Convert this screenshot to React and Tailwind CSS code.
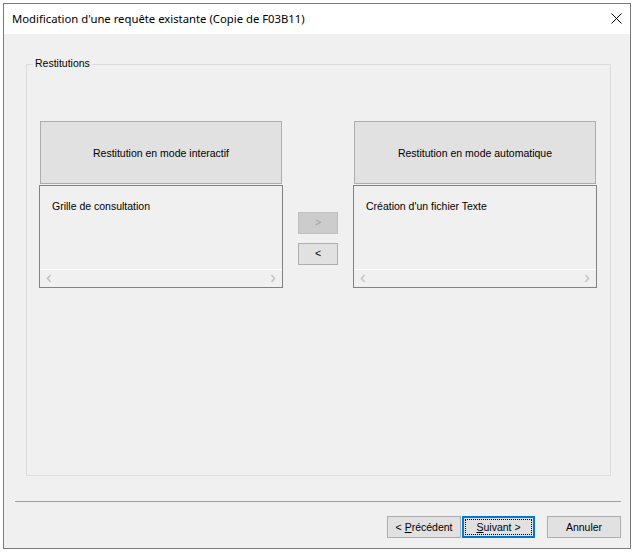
import React from 'react';

function Chevron({ dir }) {
    return (
        <svg width="6" height="9" viewBox="0 0 6 9" className="block">
            {dir === 'left' ? (
                <polyline points="4.5,1 1.5,4.5 4.5,8" fill="none" stroke="#c4c4c4" strokeWidth="1.6" />
            ) : (
                <polyline points="1.5,1 4.5,4.5 1.5,8" fill="none" stroke="#c4c4c4" strokeWidth="1.6" />
            )}
        </svg>
    );
}

function ListPanel({ header, item }) {
    return (
        <div className="flex w-[244px] flex-col">
            <div className="mx-[1px] flex h-[63px] items-center justify-center border border-[#adadad] bg-[#e1e1e1] pt-[2px]">
                {header}
            </div>
            <div className="mt-[1px] flex h-[103px] flex-col border border-[#828282] bg-[#f0f0f0]">
                <div className="flex-1 pl-[12px] pt-[14px] leading-[13px]">{item}</div>
                <div className="flex h-[18px] items-center justify-between border-t border-white pl-[6px] pr-[6px]">
                    <Chevron dir="left" />
                    <Chevron dir="right" />
                </div>
            </div>
        </div>
    );
}

export default function App() {
    return (
        <div className="min-h-[552px] bg-white pl-[3px] pt-[3px] font-['Liberation_Sans',Arial,sans-serif] text-[10.5px] text-black">
            <div className="flex h-[546px] w-[628px] flex-col border border-[#7a7a7a]">
                {/* Title bar */}
                <div className="flex h-[30px] items-center justify-between bg-white pl-[8px] pr-[7px]">
                    <span className="font-['Noto_Sans',sans-serif] text-[11.3px] leading-none text-black">
                        Modification d'une requête existante (Copie de F03B11)
                    </span>
                    <svg width="11" height="11" viewBox="0 0 11 11" className="mr-[1px] mt-[-2px]">
                        <path d="M0.5 0.5 L10.5 10.5 M10.5 0.5 L0.5 10.5" stroke="#000" strokeWidth="1" />
                    </svg>
                </div>

                {/* Content */}
                <div className="flex flex-1 flex-col bg-[#f0f0f0]">
                    <div className="relative ml-[22px] mt-[30px] h-[412px] w-[585px] border border-[#dcdcdc]">
                        <span className="absolute left-[6px] top-[-8px] bg-[#f0f0f0] px-[2px] leading-[13px]">
                            Restitutions
                        </span>
                        <div className="flex pl-[12px] pt-[56px]">
                            <ListPanel header="Restitution en mode interactif" item="Grille de consultation" />
                            <div className="mx-[15px] flex w-[40px] flex-col gap-[9px] pt-[91px]">
                                <div className="flex h-[22px] items-center justify-center border border-[#bfbfbf] bg-[#cccccc] text-[#a0a0a0]">
                                    &gt;
                                </div>
                                <div className="flex h-[22px] items-center justify-center border border-[#adadad] bg-[#e1e1e1]">
                                    &lt;
                                </div>
                            </div>
                            <ListPanel header="Restitution en mode automatique" item="Création d'un fichier Texte" />
                        </div>
                    </div>

                    {/* Separator */}
                    <div className="ml-[11px] mr-[9px] mt-[25px] h-px bg-[#a0a0a0]" />

                    {/* Footer buttons */}
                    <div className="mt-[14px] flex justify-end pr-[9px]">
                        <div className="flex h-[22px] w-[74px] items-center justify-center border border-[#adadad] bg-[#e1e1e1] pt-[2px]">
                            &lt; <span className="ml-[3px] underline underline-offset-[1px]">P</span>récédent
                        </div>
                        <div className="ml-[1px] flex h-[22px] w-[73px] items-center justify-center border-2 border-[#0078d7] bg-[#e1e1e1] pt-[2px] outline-1 -outline-offset-4 outline-dotted outline-black">
                            <span className="underline underline-offset-[1px]">S</span>uivant &gt;
                        </div>
                        <div className="ml-[12px] flex h-[22px] w-[74px] items-center justify-center border border-[#adadad] bg-[#e1e1e1] pt-[2px]">
                            Annuler
                        </div>
                    </div>
                </div>
            </div>
        </div>
    );
}
